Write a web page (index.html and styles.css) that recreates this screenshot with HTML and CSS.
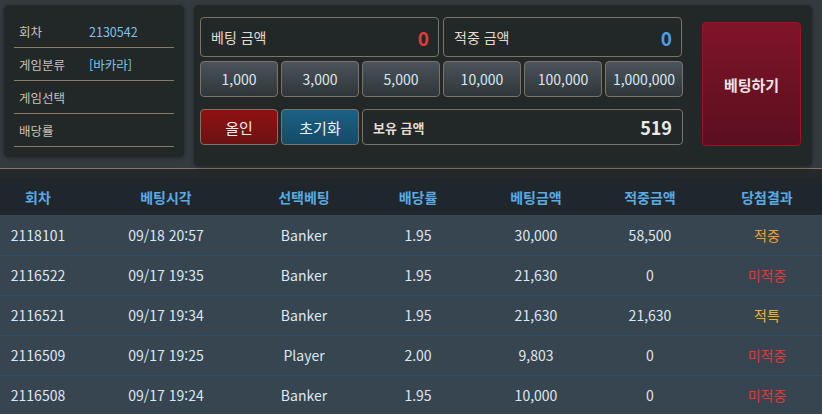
FILE: index.html
```html
<!DOCTYPE html>
<html lang="ko">
<head>
<meta charset="utf-8">
<link rel="stylesheet" href="styles.css">
</head>
<body>
<div class="top">
  <div class="info">
    <div class="info-row"><span class="lbl">회차</span><span class="val">2130542</span></div>
    <div class="info-row"><span class="lbl">게임분류</span><span class="val">[바카라]</span></div>
    <div class="info-row"><span class="lbl">게임선택</span><span class="val"></span></div>
    <div class="info-row"><span class="lbl">배당률</span><span class="val"></span></div>
  </div>
  <div class="bet">
    <div class="bet-grid">
      <div class="amounts">
        <div class="amt"><span>베팅 금액</span><b class="red">0</b></div>
        <div class="amt"><span>적중 금액</span><b class="blue">0</b></div>
      </div>
      <div class="chips">
        <button class="chip">1,000</button>
        <button class="chip">3,000</button>
        <button class="chip">5,000</button>
        <button class="chip">10,000</button>
        <button class="chip">100,000</button>
        <button class="chip">1,000,000</button>
      </div>
      <div class="actions">
        <button class="act allin">올인</button>
        <button class="act reset">초기화</button>
        <div class="hold"><span>보유 금액</span><b>519</b></div>
      </div>
    </div>
    <button class="go">베팅하기</button>
  </div>
</div>
<div class="sep"></div>
<table class="hist">
  <colgroup>
    <col style="width:76px"><col style="width:180px"><col style="width:96px"><col style="width:132px"><col style="width:104px"><col style="width:124px"><col style="width:110px">
  </colgroup>
  <thead>
    <tr><th>회차</th><th>베팅시각</th><th>선택베팅</th><th>배당률</th><th>베팅금액</th><th>적중금액</th><th>당첨결과</th></tr>
  </thead>
  <tbody>
    <tr><td>2118101</td><td>09/18 20:57</td><td>Banker</td><td>1.95</td><td>30,000</td><td>58,500</td><td class="win">적중</td></tr>
    <tr><td>2116522</td><td>09/17 19:35</td><td>Banker</td><td>1.95</td><td>21,630</td><td>0</td><td class="lose">미적중</td></tr>
    <tr><td>2116521</td><td>09/17 19:34</td><td>Banker</td><td>1.95</td><td>21,630</td><td>21,630</td><td class="spec">적특</td></tr>
    <tr><td>2116509</td><td>09/17 19:25</td><td>Player</td><td>2.00</td><td>9,803</td><td>0</td><td class="lose">미적중</td></tr>
    <tr><td>2116508</td><td>09/17 19:24</td><td>Banker</td><td>1.95</td><td>10,000</td><td>0</td><td class="lose">미적중</td></tr>
  </tbody>
</table>
</body>
</html>
```

FILE: styles.css
```css
* { box-sizing: border-box; }
html, body { margin: 0; padding: 0; }
body {
  width: 822px;
  height: 414px;
  overflow: hidden;
  background: #36444e;
  font-family: "Noto Sans CJK KR", "Noto Sans", sans-serif;
  color: #dde6ec;
}
.top {
  display: flex;
  align-items: flex-start;
  gap: 10px;
  height: 168px;
  padding: 5px 10px 0 4px;
  background: #333b3f;
}
.info {
  width: 180px;
  height: 152px;
  background: #222728;
  border-radius: 5px;
  box-shadow: 0 1px 4px rgba(0,0,0,0.35);
  padding: 10px 10px 0 10px;
}
.info-row {
  display: flex;
  align-items: center;
  height: 33px;
  border-bottom: 1px solid #8a7b68;
  padding-left: 5px;
  font-size: 12.5px;
}
.info-row:first-child { height: 33px; }
.lbl { width: 70px; color: #c9c2b6; }
.val { color: #7cc4ea; }
.bet {
  flex: 1;
  height: 161px;
  background: #222728;
  border-radius: 5px;
  box-shadow: 0 1px 4px rgba(0,0,0,0.35);
  padding: 12px 11px 0 6px;
  display: flex;
  align-items: flex-start;
}
.bet-grid {
  width: 483px;
  display: flex;
  flex-direction: column;
}
.amounts { display: flex; gap: 4px; }
.amt {
  width: 239px;
  height: 40px;
  border: 1px solid #7c7265;
  border-radius: 4px;
  display: flex;
  align-items: center;
  justify-content: space-between;
  padding: 0 9px 0 10px;
  font-size: 14px;
  color: #e4dccf;
}
.amt b { font-size: 19px; font-weight: 700; }
.red { color: #e23b3b; }
.blue { color: #4a9fe6; }
.chips { display: flex; gap: 3px; margin-top: 4px; }
.chip {
  width: 78px;
  height: 36px;
  border: 1px solid #7c7265;
  border-radius: 4px;
  background: linear-gradient(#4a545a, #2f363a);
  color: #dde6ec;
  font-family: inherit;
  font-size: 14px;
  padding: 0;
}
.actions { display: flex; gap: 3px; margin-top: 12px; }
.act {
  width: 78px;
  height: 36px;
  border: 1px solid #7c7265;
  border-radius: 4px;
  color: #eef0f2;
  font-family: inherit;
  font-size: 15px;
  padding: 0;
}
.allin { background: linear-gradient(#8f1111, #6c1212); }
.reset { background: linear-gradient(#1b6186, #154a66); }
.hold {
  flex: 1;
  height: 36px;
  border: 1px solid #7c7265;
  border-radius: 4px;
  display: flex;
  align-items: center;
  justify-content: space-between;
  padding: 0 10px 0 10px;
}
.hold span { font-size: 13px; font-weight: 700; color: #e4dccf; }
.hold b { font-size: 18px; font-weight: 700; color: #eceae6; }
.go {
  margin-left: 19px;
  margin-top: 5px;
  width: 99px;
  height: 124px;
  border: 1px solid #a3101e;
  border-radius: 4px;
  background: linear-gradient(#7f1429, #5a0f1f);
  color: #ece4e4;
  font-family: inherit;
  font-size: 15px;
  font-weight: 700;
  padding: 0;
}
.sep {
  height: 10px;
  border-top: 1px solid #857766;
  background: #262929;
}
.hist {
  width: 822px;
  border-collapse: collapse;
  table-layout: fixed;
}
.hist th {
  height: 37px;
  background: #1f272d;
  color: #5aaae4;
  font-size: 14px;
  font-weight: 700;
  text-align: center;
  padding: 0;
}
.hist td {
  height: 40px;
  background: #36454f;
  border-bottom: 1px solid #2c4e66;
  text-align: center;
  font-size: 14px;
  color: #dde8f0;
  padding: 0;
}
.hist td.win { color: #f0a030; }
.hist td.lose { color: #e23838; }
.hist td.spec { color: #e9b230; }
```
